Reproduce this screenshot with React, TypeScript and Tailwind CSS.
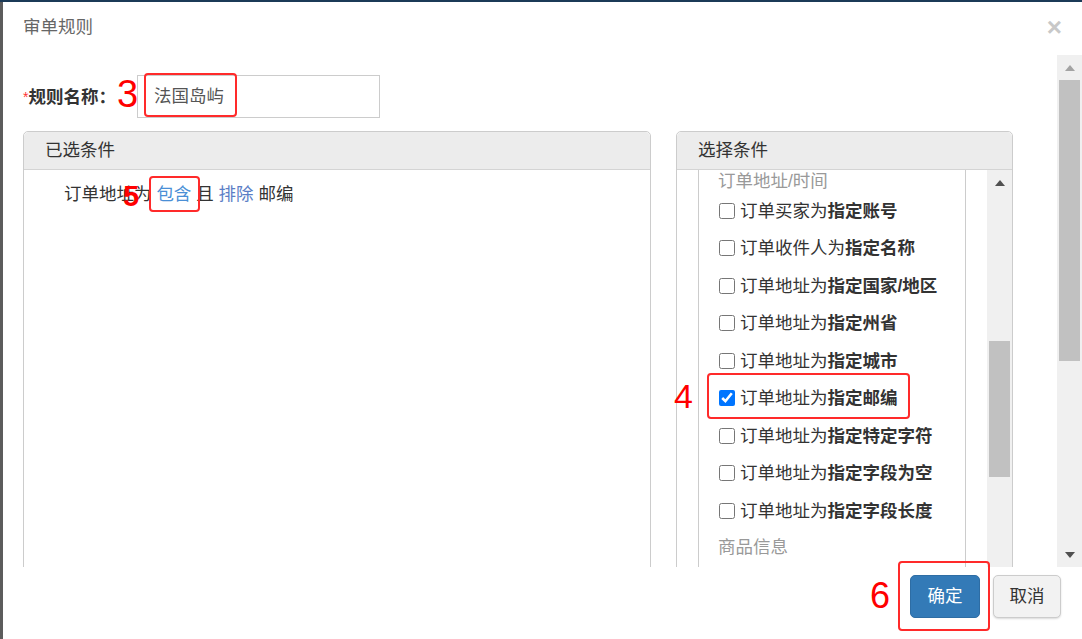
import React from "react";

const items: { pre: string; bold: string; checked?: boolean }[] = [
  { pre: "订单买家为", bold: "指定账号" },
  { pre: "订单收件人为", bold: "指定名称" },
  { pre: "订单地址为", bold: "指定国家/地区" },
  { pre: "订单地址为", bold: "指定州省" },
  { pre: "订单地址为", bold: "指定城市" },
  { pre: "订单地址为", bold: "指定邮编", checked: true },
  { pre: "订单地址为", bold: "指定特定字符" },
  { pre: "订单地址为", bold: "指定字段为空" },
  { pre: "订单地址为", bold: "指定字段长度" },
];

function UpArrow({ color }: { color: string }) {
  return (
    <svg width="10" height="6" viewBox="0 0 10 6">
      <path d="M0 6 L5 0 L10 6 Z" fill={color} />
    </svg>
  );
}
function DownArrow({ color }: { color: string }) {
  return (
    <svg width="10" height="6" viewBox="0 0 10 6">
      <path d="M0 0 L5 6 L10 0 Z" fill={color} />
    </svg>
  );
}

export default function App() {
  return (
    <div className="w-[1082px] h-[639px] overflow-hidden bg-[#5c5c5c] border-t-2 border-[#1b3a57] pl-[3px] font-['Liberation_Sans','Noto_Sans_CJK_SC',sans-serif] text-[#333]">
      <div className="relative w-[1079px] h-[637px] bg-white flex flex-col">
        {/* header */}
        <div className="h-[53px] flex items-center justify-between pl-[20px] pr-[20px] pb-[3px]">
          <span className="text-[17.5px] leading-[24px] text-[#666]">审单规则</span>
          <span className="text-[26px] leading-none font-bold text-[#c8c8c8]">×</span>
        </div>

        {/* body */}
        <div className="h-[512px] flex">
          <div className="flex-1 overflow-hidden pl-[20px] pt-[20px]">
            <div className="flex items-center h-[43px]">
              <div className="w-[114px] text-[17.5px] leading-[24px] font-bold">
                <span className="text-[#ff3333] font-normal text-[14px] align-top">*</span>规则名称：
              </div>
              <div className="w-[243px] h-[43px] border border-[#ccc] flex items-center pl-[16px] text-[17.5px] text-[#555]">
                法国岛屿
              </div>
            </div>

            <div className="mt-[13px] flex gap-[25px]">
              {/* selected conditions */}
              <div className="w-[628px] h-[460px] border border-[#ccc] rounded-t-[5px] flex flex-col">
                <div className="h-[38px] bg-[#ececec] border-b border-[#d4d4d4] rounded-t-[5px] flex items-center pl-[21px] text-[17.5px]">
                  已选条件
                </div>
                <div className="pl-[40px] pt-[12px] text-[17.5px] leading-[24px] whitespace-pre">
                  订单地址为 <span className="text-[#4a8fd6]">包含</span> 且 <span className="text-[#5b7ec6]">排除</span> 邮编
                </div>
              </div>

              {/* select conditions */}
              <div className="w-[337px] h-[460px] border border-[#ccc] rounded-t-[5px] flex flex-col">
                <div className="h-[38px] bg-[#ececec] border-b border-[#d4d4d4] rounded-t-[5px] flex items-center pl-[21px] text-[17.5px]">
                  选择条件
                </div>
                <div className="flex flex-1 pl-[21px]">
                  <div className="w-[268px] border-l border-r border-[#ccc] flex flex-col text-[17.5px]">
                    <div className="h-[22px] leading-[22px] pl-[19px] text-[#999]">订单地址/时间</div>
                    {items.map((it, i) => (
                      <label key={i} className="h-[37.5px] flex items-center pl-[20px] gap-[5px]">
                        <input
                          type="checkbox"
                          defaultChecked={!!it.checked}
                          className="w-4 h-4 m-0 accent-[#0075ff]"
                        />
                        <span className="leading-[24px]">
                          {it.pre}
                          <b className="font-bold">{it.bold}</b>
                        </span>
                      </label>
                    ))}
                    <div className="h-[34px] leading-[34px] pl-[19px] text-[#999]">商品信息</div>
                  </div>
                  <div className="w-[21px]" />
                  <div className="w-[25px] bg-[#f0f0f0] flex flex-col items-center">
                    <div className="h-[26px] flex items-center justify-center">
                      <UpArrow color="#505050" />
                    </div>
                    <div className="mt-[145px] w-[21px] h-[136px] bg-[#c1c1c1]" />
                  </div>
                </div>
              </div>
            </div>
          </div>

          {/* outer scrollbar */}
          <div className="w-[25px] bg-[#f0f0f0] flex flex-col items-center">
            <div className="h-[25px] flex items-center justify-center">
              <UpArrow color="#a3a3a3" />
            </div>
            <div className="w-[21px] h-[281px] bg-[#c1c1c1]" />
            <div className="flex-1" />
            <div className="h-[24px] flex items-center justify-center">
              <DownArrow color="#505050" />
            </div>
          </div>
        </div>

        {/* footer */}
        <div className="flex-1 flex justify-end items-start pt-[8px] pr-[21px] gap-[13px]">
          <button className="w-[70px] h-[43px] rounded-[5px] bg-[#337ab7] border border-[#2e6da4] text-white text-[17.5px]">
            确定
          </button>
          <button className="w-[68px] h-[43px] rounded-[5px] bg-[#f2f2f2] border border-[#ccc] shadow-[0_1px_2px_rgba(0,0,0,0.15)] text-[#333] text-[17.5px]">
            取消
          </button>
        </div>

        {/* annotations */}
        <span className="absolute left-[114px] top-[73px] text-[38px] leading-none text-[#ff0000] font-['Liberation_Sans',sans-serif]">3</span>
        <div className="absolute left-[141px] top-[71px] w-[93px] h-[44px] border-2 border-[#ff2a2a] rounded-[4px]" />

        <span className="absolute left-[120px] top-[180px] text-[29px] leading-none font-bold text-[#ff0000] font-['Liberation_Sans',sans-serif]">5</span>
        <div className="absolute left-[146px] top-[174px] w-[51px] h-[36px] border-2 border-[#ff2a2a] rounded-[4px]" />

        <span className="absolute left-[671px] top-[377px] text-[34px] leading-none text-[#ff0000] font-['Liberation_Sans',sans-serif]">4</span>
        <div className="absolute left-[704px] top-[371px] w-[203px] h-[46px] border-2 border-[#ff2a2a] rounded-[4px]" />

        <span className="absolute left-[867px] top-[576px] text-[36px] leading-none text-[#ff0000] font-['Liberation_Sans',sans-serif]">6</span>
        <div className="absolute left-[895px] top-[559px] w-[92px] h-[70px] border-2 border-[#ff2a2a] rounded-[4px]" />
      </div>
    </div>
  );
}
